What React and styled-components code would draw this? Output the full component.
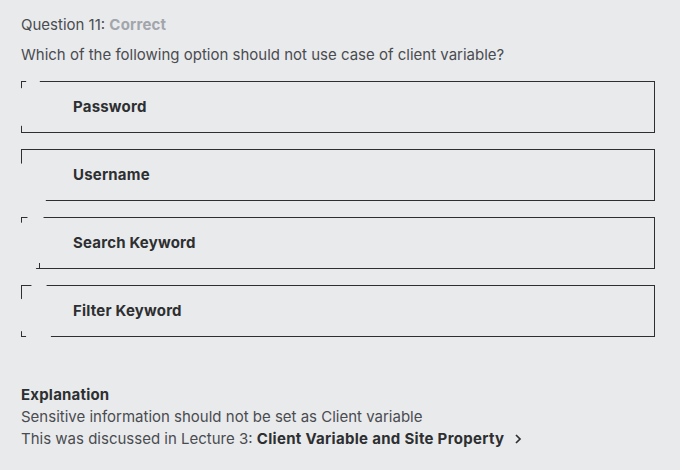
import React from 'react';
import styled, { createGlobalStyle } from 'styled-components';

const GlobalStyle = createGlobalStyle`
  body {
    margin: 0;
    background: #e9eaec;
    font-family: Inter, "Noto Sans", sans-serif;
    color: #2d2f31;
  }
`;

const Page = styled.div`
  padding: 14px 25px 0 21px;
  width: 680px;
  height: 470px;
  box-sizing: border-box;
  background: #e9eaec;
`;

const Heading = styled.div`
  font-size: 15px;
  line-height: 22px;
  color: #4a4c50;
`;

const Status = styled.span`
  font-weight: 700;
  color: #a2a5ab;
  letter-spacing: 0.2px;
`;

const Prompt = styled.div`
  margin-top: 8px;
  font-size: 15px;
  line-height: 22px;
  color: #4a4c50;
`;

const OptionList = styled.div`
  margin-top: 15px;
  display: flex;
  flex-direction: column;
  gap: 16px;
`;

const Option = styled.div`
  position: relative;
  height: 52px;
  border: 1px solid #2d2f31;
  box-sizing: border-box;
  display: flex;
  align-items: center;
  padding: 0 0 2px 51px;
  font-size: 15px;
  font-weight: 700;
  letter-spacing: 0.2px;
  color: #2d2f31;
`;

const Label = styled.span`
  position: relative;
`;

const Blob = styled.div`
  position: absolute;
  left: ${p => p.$x}px;
  top: ${p => p.$y}px;
  width: ${p => p.$w}px;
  height: ${p => p.$h}px;
  border-radius: 50%;
  background: #e9eaec;
`;

const Tick = styled.div`
  position: absolute;
  left: ${p => p.$x}px;
  top: ${p => p.$y}px;
  width: 1px;
  height: ${p => p.$h}px;
  background: #2d2f31;
`;

const Explanation = styled.div`
  margin-top: 47px;
  font-size: 15px;
  line-height: 22px;
  color: #4a4c50;
`;

const ExplanationTitle = styled.div`
  font-weight: 700;
  letter-spacing: 0.2px;
  color: #2d2f31;
`;

const LectureLink = styled.span`
  font-weight: 700;
  letter-spacing: 0.3px;
  color: #2d2f31;
  display: inline-flex;
  align-items: center;
  gap: 9px;
`;

const options = [
  {
    label: 'Password',
    blobs: [{ x: -8, y: 3, w: 30, h: 44 }, { x: 4, y: -4, w: 14, h: 8 }],
  },
  {
    label: 'Username',
    blobs: [{ x: -10, y: 10, w: 38, h: 50 }],
  },
  {
    label: 'Search Keyword',
    blobs: [{ x: -10, y: 3, w: 28, h: 56 }, { x: 5, y: -4, w: 17, h: 10 }],
    ticks: [{ x: 17, y: 45, h: 6 }],
  },
  {
    label: 'Filter Keyword',
    blobs: [{ x: -9, y: 10, w: 36, h: 38 }, { x: 9, y: -4, w: 16, h: 10 }, { x: 4, y: 44, w: 25, h: 14 }],
  },
];

const Chevron = () => (
  <svg width="10" height="12" viewBox="0 0 10 12" fill="none">
    <path d="M3 2 L7 6 L3 10" stroke="#2d2f31" strokeWidth="1.7" />
  </svg>
);

const App = () => (
  <Page>
    <GlobalStyle />
    <Heading>
      Question 11: <Status>Correct</Status>
    </Heading>
    <Prompt>Which of the following option should not use case of client variable?</Prompt>
    <OptionList>
      {options.map(option => (
        <Option key={option.label}>
          {option.blobs.map((b, i) => (
            <Blob key={i} $x={b.x} $y={b.y} $w={b.w} $h={b.h} />
          ))}
          {(option.ticks || []).map((t, i) => (
            <Tick key={i} $x={t.x} $y={t.y} $h={t.h} />
          ))}
          <Label>{option.label}</Label>
        </Option>
      ))}
    </OptionList>
    <Explanation>
      <ExplanationTitle>Explanation</ExplanationTitle>
      <div>Sensitive information should not be set as Client variable</div>
      <div>
        This was discussed in Lecture 3:{' '}
        <LectureLink>
          Client Variable and Site Property
          <Chevron />
        </LectureLink>
      </div>
    </Explanation>
  </Page>
);

export default App;
